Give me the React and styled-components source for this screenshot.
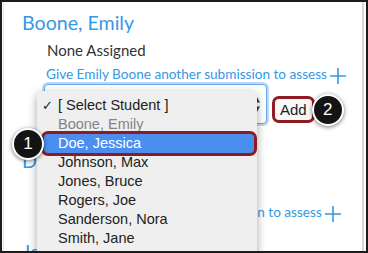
import React from "react";
import styled, { createGlobalStyle } from "styled-components";

const GlobalStyle = createGlobalStyle`
  body {
    margin: 0;
    background: #ffffff;
    font-family: "Lato", "Open Sans", sans-serif;
  }
`;

const students = [
  "[ Select Student ]",
  "Boone, Emily",
  "Doe, Jessica",
  "Johnson, Max",
  "Jones, Bruce",
  "Rogers, Joe",
  "Sanderson, Nora",
  "Smith, Jane",
  "Stark, Tony",
];

const PlusIcon = () => (
  <svg width="16" height="16" viewBox="0 0 16 16">
    <path d="M8 0v16M0 8h16" stroke="#3598e5" strokeWidth="1.6" fill="none" />
  </svg>
);

const Arrows = () => (
  <svg width="6" height="15" viewBox="0 0 6 15">
    <path d="M3 0L6 5.5H0z M3 15L6 9.5H0z" fill="#3a3a3a" />
  </svg>
);

const App = () => {
  return (
    <>
      <GlobalStyle />
      <Frame>
        <Panel>
          <Block>
            <Name>Boone, Emily</Name>
            <Status>None Assigned</Status>
            <GiveLink>
              Give Emily Boone another submission to assess
              <PlusIcon />
            </GiveLink>
            <PickRow>
              <SelectBox>
                <Arrows />
                <Menu>
                  {students.map((s, i) => (
                    <MenuItem key={s} $disabled={i === 1} $active={i === 2}>
                      {i === 0 && <Check>✓</Check>}
                      {s}
                      {i === 2 && <Badge $left="-32px">1</Badge>}
                    </MenuItem>
                  ))}
                </Menu>
              </SelectBox>
              <AddWrap>
                <AddButton>Add</AddButton>
                <Badge $left="calc(100% - 3px)">2</Badge>
              </AddWrap>
            </PickRow>
          </Block>
          <Block>
            <Name>Doe, Jessica</Name>
            <Status>None Assigned</Status>
            <GiveLink>
              Give Jessica Doe another submission to assess
              <PlusIcon />
            </GiveLink>
          </Block>
          <Block>
            <Name>Johnson, Max</Name>
          </Block>
        </Panel>
      </Frame>
    </>
  );
};

export default App;

const Frame = styled.div`
  width: 368px;
  height: 253px;
  box-sizing: border-box;
  border: 2px solid #1c1c1c;
  padding: 0 2px 0 1px;
  display: flex;
  overflow: hidden;
  background: #ffffff;
`;

const Panel = styled.div`
  flex: 1;
  border-left: 1px solid #e6e6e6;
  border-right: 2px solid #d8d8d8;
  padding: 9px 0 0 18px;
`;

const Block = styled.div`
  margin-bottom: 18px;
`;

const Name = styled.h2`
  margin: 0;
  font-size: 19.6px;
  line-height: 24px;
  font-weight: 400;
  color: #3598e5;
`;

const Status = styled.div`
  margin: 6px 0 0 25px;
  font-size: 15px;
  line-height: 18px;
  color: #333333;
`;

const GiveLink = styled.div`
  margin: 6px 0 0 24px;
  display: flex;
  align-items: center;
  gap: 3px;
  font-size: 13.6px;
  line-height: 17px;
  color: #3598e5;
  svg {
    margin-top: 3px;
  }
`;

const PickRow = styled.div`
  margin: 0 0 25px 22px;
  height: 40px;
  display: flex;
  align-items: flex-end;
  gap: 5px;
`;

const SelectBox = styled.div`
  position: relative;
  width: 223px;
  height: 40px;
  box-sizing: border-box;
  border: 1px solid #6aa8ee;
  border-radius: 4px;
  box-shadow: 0 0 0 2px rgba(110, 170, 240, 0.45);
  background: #ffffff;
  display: flex;
  align-items: center;
  justify-content: flex-end;
  padding-right: 6px;
`;

const Menu = styled.ul`
  position: absolute;
  left: -8px;
  top: 6px;
  width: 220px;
  margin: 0;
  padding: 5px 0;
  list-style: none;
  background: #efefef;
  border-radius: 5px;
  box-shadow: 0 3px 10px rgba(0, 0, 0, 0.35);
  font-family: "Liberation Sans", Arial, sans-serif;
  font-size: 14.5px;
  z-index: 2;
`;

const MenuItem = styled.li`
  position: relative;
  height: 19px;
  line-height: 19px;
  padding-left: 21px;
  color: ${(p) => (p.$disabled ? "#858585" : "#222222")};
  ${(p) =>
    p.$active &&
    `
    margin: -3px 0 -3px 4px;
    padding-left: 14px;
    color: #ffffff;
    background: #4a8ff0;
    border: 3px solid #8e1b22;
    border-radius: 7px;
  `}
`;

const Check = styled.span`
  position: absolute;
  left: 5px;
  top: 0;
  font-family: "DejaVu Sans", sans-serif;
  font-size: 13px;
`;

const AddWrap = styled.div`
  position: relative;
  margin-bottom: 1px;
`;

const AddButton = styled.button`
  display: block;
  height: 27px;
  padding: 0 5px;
  border: 3px solid #8e1b22;
  border-radius: 7px;
  background: #f8f8f8;
  color: #222222;
  font-family: "Liberation Sans", Arial, sans-serif;
  font-size: 15px;
`;

const Badge = styled.span`
  position: absolute;
  left: ${(p) => p.$left};
  top: 50%;
  transform: translateY(-50%);
  width: 28px;
  height: 28px;
  border-radius: 50%;
  border: 2px solid #ffffff;
  background: #141414;
  box-shadow: 0 1px 4px rgba(0, 0, 0, 0.55);
  color: #ffffff;
  font-family: "Liberation Sans", Arial, sans-serif;
  font-size: 17px;
  line-height: 28px;
  text-align: center;
  z-index: 3;
`;
